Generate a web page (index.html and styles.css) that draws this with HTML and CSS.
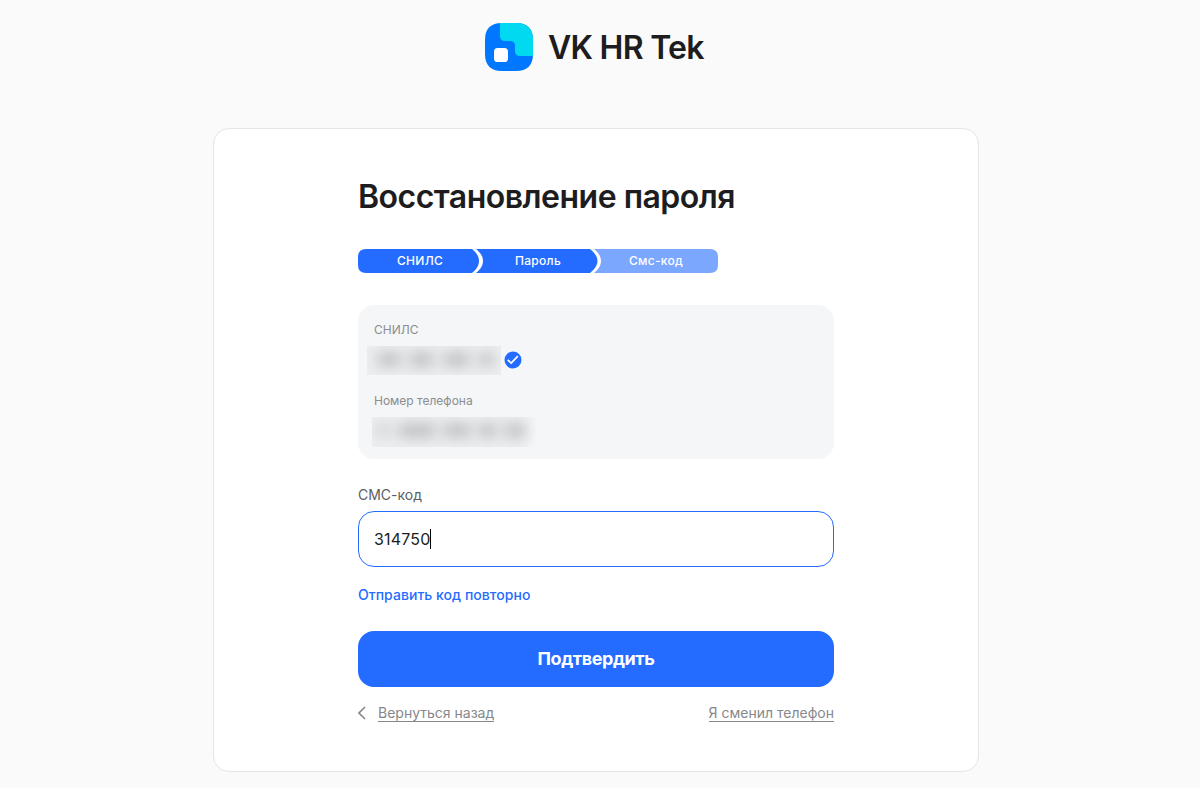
FILE: index.html
```html
<!DOCTYPE html>
<html lang="ru">
<head>
<meta charset="utf-8">
<title>VK HR Tek</title>
<link rel="stylesheet" href="styles.css">
</head>
<body>
<header class="brand">
  <svg class="brand-mark" width="48" height="48" viewBox="0 0 48 48">
    <path fill="#0077ff" d="M15 0H31Q48 0 48 17V31Q48 48 31 48H17Q0 48 0 31V17Q0 0 17 0Z"/>
    <path fill="#00d9f0" d="M15 0H31Q48 0 48 17V33H35Q30 33 30 28V23Q30 18 25 18H20Q15 18 15 13Z"/>
    <rect x="9" y="25" width="14" height="14" rx="3.6" fill="#fff"/>
  </svg>
  <span class="brand-name">VK HR Tek</span>
</header>
<main class="card">
  <h1 class="title">Восстановление пароля</h1>
  <div class="steps">
    <svg class="steps-shape" width="360" height="24" viewBox="0 0 360 24">
      <path fill="#246cff" d="M8 0H114C119 4 121 8 121 12C121 16 119 20 114 24H8Q0 24 0 16V8Q0 0 8 0Z"/>
      <path fill="#246cff" d="M118 0H232C237 4 239.500 8 239.500 12C239.500 16 237 20 232 24H118C123 20 125 16 125 12C125 8 123 4 118 0Z"/>
      <path fill="#7ba7ff" d="M236 0H352Q360 0 360 8V16Q360 24 352 24H236C241 20 243 16 243 12C243 8 241 4 236 0Z"/>
    </svg>
    <span class="step">СНИЛС</span>
    <span class="step">Пароль</span>
    <span class="step">Смс-код</span>
  </div>
  <section class="info">
    <div class="info-label">СНИЛС</div>
    <div class="info-row">
      <div class="masked masked-id"><i class="blot b1"></i><i class="blot b2"></i><i class="blot b3"></i><i class="blot b4"></i></div>
      <svg class="check" width="18" height="18" viewBox="0 0 18 18">
        <circle cx="9" cy="9" r="8.500" fill="#246cff"/>
        <path d="M3.700 8.900L7.200 12.100L13.800 5.200" fill="none" stroke="#fff" stroke-width="1.700"/>
      </svg>
    </div>
    <div class="info-label phone-label">Номер телефона</div>
    <div class="masked masked-phone"><i class="blot p1"></i><i class="blot p2"></i><i class="blot p3"></i><i class="blot p4"></i><i class="blot p5"></i></div>
  </section>
  <div class="field-label">СМС-код</div>
  <div class="field"><span class="code">314750</span><span class="caret"></span></div>
  <a class="resend">Отправить код повторно</a>
  <button class="submit" type="button">Подтвердить</button>
  <nav class="links">
    <span class="back">
      <svg width="8" height="14" viewBox="0 0 8 14"><path d="M7 1L1 7L7 13" fill="none" stroke="#87888b" stroke-width="1.600"/></svg>
      <a class="link back-link">Вернуться назад</a>
    </span>
    <a class="link changed-link">Я сменил телефон</a>
  </nav>
</main>
</body>
</html>
```
FILE: styles.css
```css
* { box-sizing: border-box; }
body {
  margin: 0;
  height: 788px;
  overflow: hidden;
  background: #fafafa;
  color: #1d1d20;
  font-family: Inter, "Liberation Sans", sans-serif;
}
.brand {
  display: flex;
  align-items: center;
  gap: 15px;
  height: 48px;
  margin: 23px 0 57px 485px;
}
.brand-name {
  padding-top: 1px;
  font-size: 32px;
  font-weight: 600;
  line-height: 48px;
  letter-spacing: -0.75px;
  white-space: nowrap;
}
.card {
  width: 766px;
  height: 644px;
  margin-left: 213px;
  padding: 48px 144px 0;
  border: 1px solid #e4e5e9;
  border-radius: 16px;
  background: #fff;
}
.title {
  margin: 0;
  font-size: 32px;
  font-weight: 600;
  line-height: 40px;
  letter-spacing: -0.51px;
  white-space: nowrap;
}
.steps {
  position: relative;
  display: flex;
  width: 360px;
  height: 24px;
  margin-top: 32px;
  padding: 0 3px;
}
.steps-shape { position: absolute; left: 0; top: 0; }
.step {
  position: relative;
  flex: 1;
  color: #fff;
  font-size: 12px;
  font-weight: 500;
  line-height: 24px;
  letter-spacing: 0.3px;
  text-align: center;
}
.info {
  height: 154px;
  margin-top: 32px;
  padding: 17px 9px 0;
  border-radius: 16px;
  background: #f4f6f8;
}
.info-label {
  padding-left: 7px;
  color: #8c8d90;
  font-size: 12px;
  line-height: 16px;
}
.info-row { display: flex; align-items: center; gap: 3px; height: 29px; margin-top: 8px; }
.check { margin-bottom: 2px; }
.phone-label { margin-top: 18px; }
.masked { position: relative; overflow: hidden; background: #eceef0; }
.masked-id { width: 134px; height: 29px; }
.masked-phone {
  width: 164px;
  height: 30px;
  margin: 8px 0 0 5px;
  background: linear-gradient(90deg, #eceef0 90%, #f4f6f8);
}
.blot {
  position: absolute;
  top: 7px;
  height: 13px;
  border-radius: 5px;
  background: #bbbdbf;
  filter: blur(7px);
}
.b1 { left: 10px; width: 24px; }
.b2 { left: 42px; width: 25px; }
.b3 { left: 76px; width: 27px; }
.b4 { left: 112px; width: 15px; }
.p1 { left: 4px; width: 14px; opacity: .6; }
.p2 { left: 26px; width: 38px; }
.p3 { left: 71px; width: 28px; }
.p4 { left: 106px; width: 19px; }
.p5 { left: 132px; width: 22px; }
.field-label {
  margin-top: 26px;
  color: #5d5e61;
  font-size: 14px;
  line-height: 20px;
}
.field {
  display: flex;
  align-items: center;
  height: 56px;
  margin-top: 6px;
  padding-left: 15px;
  border: 1px solid #246cff;
  border-radius: 16px;
}
.code { font-size: 16px; letter-spacing: 0.17px; }
.caret { width: 1px; height: 20px; background: #000; }
.resend {
  display: block;
  margin-top: 18px;
  color: #246cff;
  font-size: 14px;
  font-weight: 500;
  line-height: 20px;
  letter-spacing: 0.04px;
}
.submit {
  display: block;
  width: 100%;
  height: 56px;
  margin-top: 26px;
  padding: 0 0 2px;
  border: 0;
  border-radius: 16px;
  background: #246cff;
  color: #fff;
  font-family: Inter, sans-serif;
  font-size: 18px;
  font-weight: 700;
  letter-spacing: -0.4px;
}
.links { display: flex; justify-content: space-between; margin-top: 17px; }
.back { display: flex; align-items: center; gap: 12px; }
.link {
  height: 18px;
  border-bottom: 1px solid #87888b;
  color: #87888b;
  font-size: 14px;
  line-height: 18px;
  white-space: nowrap;
}
```
